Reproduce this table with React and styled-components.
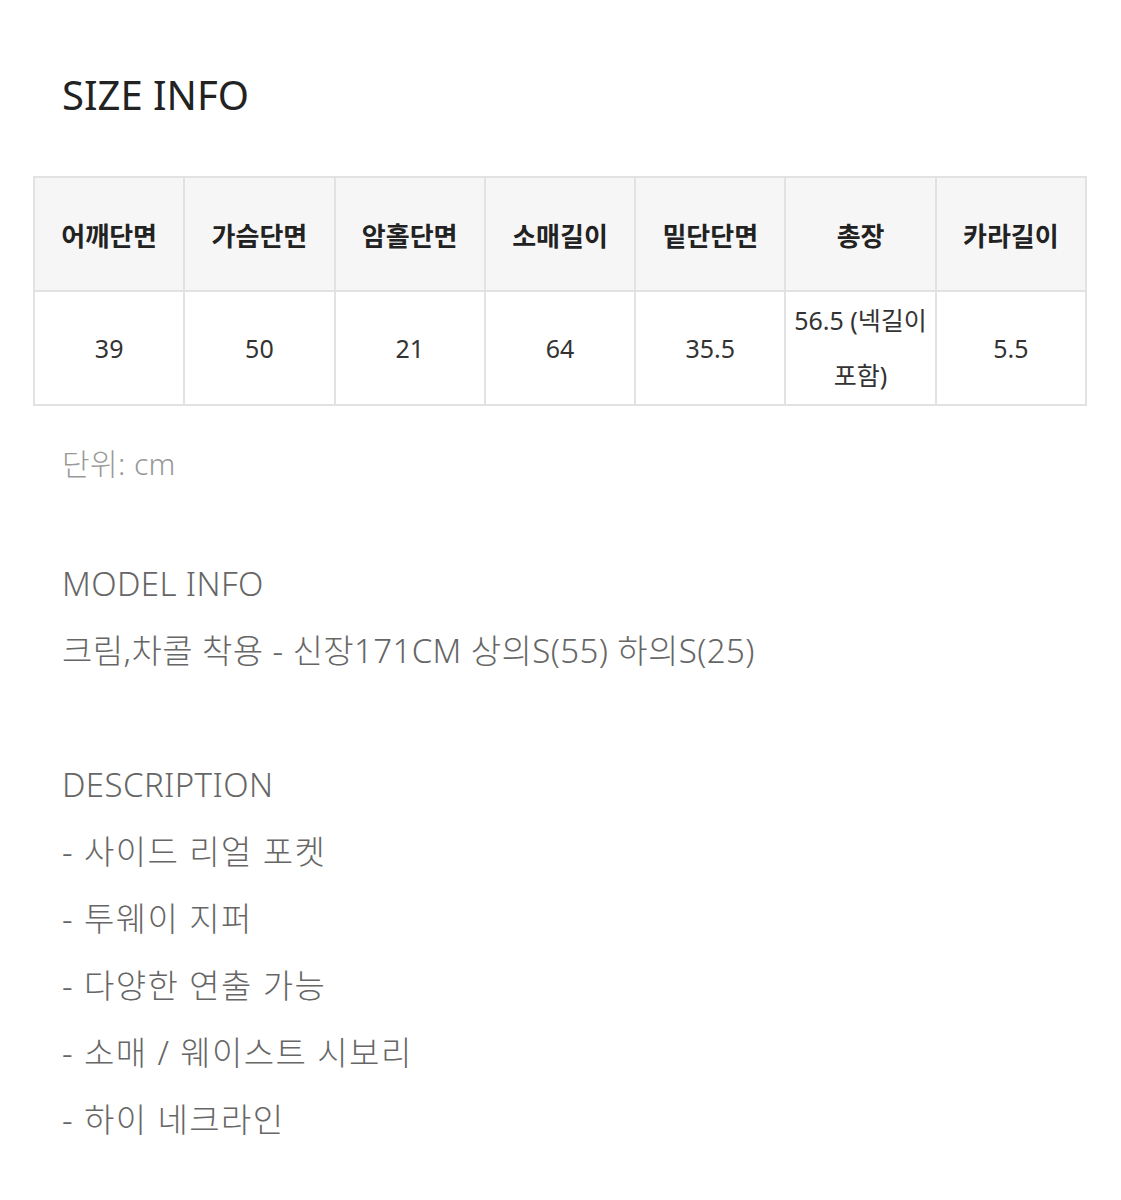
import React from "react";
import styled, { createGlobalStyle } from "styled-components";

const Global = createGlobalStyle`
  body {
    margin: 0;
    background: #fff;
    font-family: "Noto Sans", "Noto Sans CJK KR", sans-serif;
  }
`;

const Page = styled.div`
  width: 1121px;
  padding: 62px 0 40px;
`;

const Title = styled.h1`
  margin: 0 0 0 62px;
  font-size: 40px;
  font-weight: 400;
  color: #222;
  line-height: 66px;
`;

const Table = styled.table`
  margin: 48px 0 0 33px;
  width: 1054px;
  border-collapse: collapse;
  table-layout: fixed;
  border: 2px solid #e2e2e2;
`;

const Head = styled.th`
  height: 112px;
  padding: 0;
  background: #f6f6f6;
  border: 2px solid #e2e2e2;
  font-size: 26px;
  font-weight: 700;
  color: #222;
  font-family: "Noto Sans CJK KR", sans-serif;
`;

const Cell = styled.td`
  height: 112px;
  border: 2px solid #e2e2e2;
  text-align: center;
  font-size: 25px;
  color: #333;
  line-height: 55px;
  padding: 0;
`;

const Note = styled.p`
  margin: ${(p) => p.$top || 0}px 0 0 62px;
  font-size: ${(p) => p.$size || 33}px;
  letter-spacing: ${(p) => p.$ls || 0.4}px;
  color: ${(p) => p.$color || "#666"};
  line-height: 67px;
  font-weight: 300;
`;

const heads = ["어깨단면", "가슴단면", "암홀단면", "소매길이", "밑단단면", "총장", "카라길이"];
const values = ["39", "50", "21", "64", "35.5", "56.5 (넥길이 포함)", "5.5"];
const desc = [
  "- 사이드 리얼 포켓",
  "- 투웨이 지퍼",
  "- 다양한 연출 가능",
  "- 소매 / 웨이스트 시보리",
  "- 하이 네크라인",
];

export default function App() {
  return (
    <Page>
      <Global />
      <Title>SIZE INFO</Title>
      <Table>
        <thead>
          <tr>
            {heads.map((h) => (
              <Head key={h}>{h}</Head>
            ))}
          </tr>
        </thead>
        <tbody>
          <tr>
            {values.map((v, i) => (
              <Cell key={i}>{v}</Cell>
            ))}
          </tr>
        </tbody>
      </Table>
      <Note $top={24} $color="#999" $size={30}>단위: cm</Note>
      <Note $top={53}>MODEL INFO</Note>
      <Note>크림,차콜 착용 - 신장171CM 상의S(55) 하의S(25)</Note>
      <Note $top={67}>DESCRIPTION</Note>
      {desc.map((d) => (
        <Note key={d} $ls={1.4}>{d}</Note>
      ))}
    </Page>
  );
}
